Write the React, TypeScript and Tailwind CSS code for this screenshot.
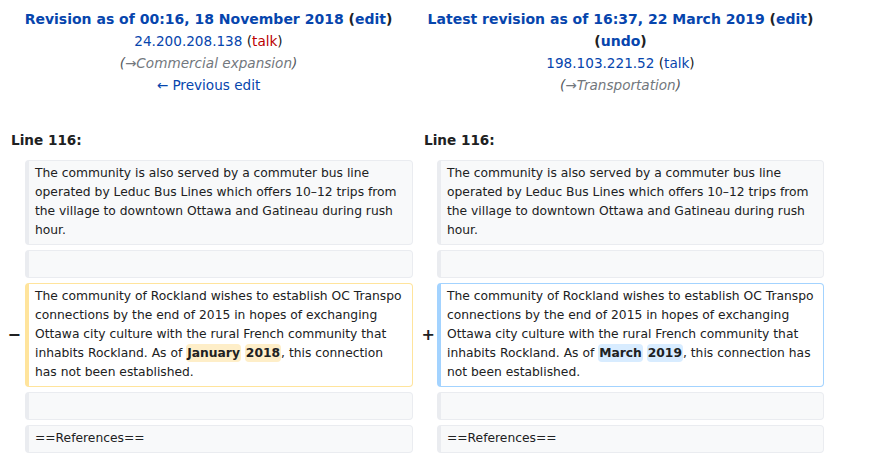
import React from "react";

const Ctx = ({ children }: { children?: React.ReactNode }) => (
  <div className="bg-[#f8f9fa] border border-[#eaecf0] border-l-4 rounded-[4px] pl-[6px] pr-[6px] pt-[3px] pb-[4px] text-[12.3px] leading-[19px] text-[#202122]">
    {children ?? "\u00a0"}
  </div>
);

export default function App() {
  return (
    <div className="w-[874px] h-[458px] bg-white text-[#202122] font-['DejaVu_Sans',sans-serif] overflow-hidden">
      <div className="grid grid-cols-[417px_407px] pt-[8px] text-center text-[13.6px] leading-[22px]">
        <div>
          <div className="font-bold text-[14px]">
            <span className="text-[#0645ad]">Revision as of 00:16, 18 November 2018</span>{" "}
            (<span className="text-[#0645ad]">edit</span>)
          </div>
          <div>
            <span className="text-[#0645ad]">24.200.208.138</span> (<span className="text-[#ba0000]">talk</span>)
          </div>
          <div className="italic text-[#72777d]">
            <span className="text-[#54595d]">(</span>→Commercial expansion<span className="text-[#54595d]">)</span>
          </div>
          <div className="text-[#0645ad]">← Previous edit</div>
        </div>
        <div>
          <div className="font-bold text-[14px]">
            <span className="text-[#0645ad]">Latest revision as of 16:37, 22 March 2019</span>{" "}
            (<span className="text-[#0645ad]">edit</span>)
            <br />
            (<span className="text-[#0645ad]">undo</span>)
          </div>
          <div>
            <span className="text-[#0645ad]">198.103.221.52</span> (<span className="text-[#0645ad]">talk</span>)
          </div>
          <div className="italic text-[#72777d]">
            <span className="text-[#54595d]">(</span>→Transportation<span className="text-[#54595d]">)</span>
          </div>
        </div>
      </div>

      <div className="grid grid-cols-[413px_411px] mt-[35px] text-[13.6px] leading-[19px] font-bold">
        <div className="pl-[11px]">Line 116:</div>
        <div className="pl-[11px]">Line 116:</div>
      </div>

      <div className="grid grid-cols-[25px_388px_24px_387px] gap-y-[5px] mt-[10px]">
        <div />
        <Ctx>
          The community is also served by a commuter bus line
          <br />
          operated by Leduc Bus Lines which offers 10–12 trips from
          <br />
          the village to downtown Ottawa and Gatineau during rush
          <br />
          hour.
        </Ctx>
        <div />
        <Ctx>
          The community is also served by a commuter bus line
          <br />
          operated by Leduc Bus Lines which offers 10–12 trips from
          <br />
          the village to downtown Ottawa and Gatineau during rush
          <br />
          hour.
        </Ctx>

        <div />
        <Ctx />
        <div />
        <Ctx />

        <div className="flex items-center justify-end pr-[4px] font-bold text-[16px]">−</div>
        <div className="bg-white border border-[#ffe49c] border-l-4 rounded-[4px] pl-[6px] pr-[6px] pt-[3px] pb-[4px] text-[12.3px] leading-[19px]">
          The community of Rockland wishes to establish OC Transpo
          <br />
          connections by the end of 2015 in hopes of exchanging
          <br />
          Ottawa city culture with the rural French community that
          <br />
          inhabits Rockland. As of{" "}
          <span className="font-bold bg-[#feeec8] rounded-[4px] px-[1px] py-[2px]">January</span>{" "}
          <span className="font-bold bg-[#feeec8] rounded-[4px] px-[1px] py-[2px]">2018</span>, this connection
          <br />
          has not been established.
        </div>
        <div className="flex items-center justify-end pr-[2px] font-bold text-[16px]">+</div>
        <div className="bg-white border border-[#a3d3ff] border-l-4 rounded-[4px] pl-[6px] pr-[6px] pt-[3px] pb-[4px] text-[12.3px] leading-[19px]">
          The community of Rockland wishes to establish OC Transpo
          <br />
          connections by the end of 2015 in hopes of exchanging
          <br />
          Ottawa city culture with the rural French community that
          <br />
          inhabits Rockland. As of{" "}
          <span className="font-bold bg-[#d8ecff] rounded-[4px] px-[1px] py-[2px]">March</span>{" "}
          <span className="font-bold bg-[#d8ecff] rounded-[4px] px-[1px] py-[2px]">2019</span>, this connection has
          <br />
          not been established.
        </div>

        <div />
        <Ctx />
        <div />
        <Ctx />

        <div />
        <Ctx>==References==</Ctx>
        <div />
        <Ctx>==References==</Ctx>
      </div>
    </div>
  );
}
